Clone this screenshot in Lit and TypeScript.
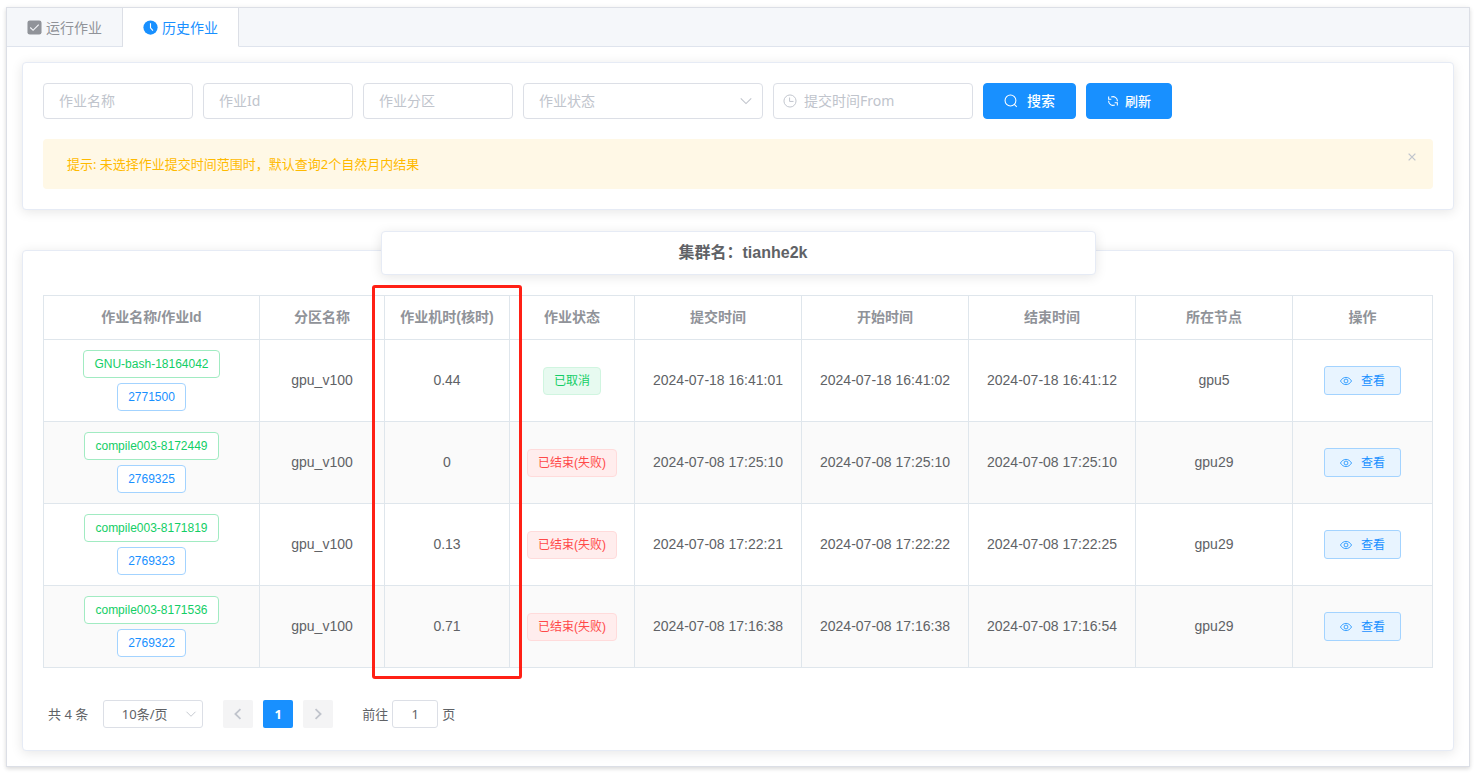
import { LitElement, html, css, svg } from "lit";
import { customElement, state } from "lit/decorators.js";
import { classMap } from "lit/directives/class-map.js";

interface Job {
  name: string;
  id: string;
  partition: string;
  hours: string;
  status: string;
  ok: boolean;
  submitted: string;
  started: string;
  ended: string;
  node: string;
}

const JOBS: Job[] = [
  { name: "GNU-bash-18164042", id: "2771500", partition: "gpu_v100", hours: "0.44", status: "已取消", ok: true, submitted: "2024-07-18 16:41:01", started: "2024-07-18 16:41:02", ended: "2024-07-18 16:41:12", node: "gpu5" },
  { name: "compile003-8172449", id: "2769325", partition: "gpu_v100", hours: "0", status: "已结束(失败)", ok: false, submitted: "2024-07-08 17:25:10", started: "2024-07-08 17:25:10", ended: "2024-07-08 17:25:10", node: "gpu29" },
  { name: "compile003-8171819", id: "2769323", partition: "gpu_v100", hours: "0.13", status: "已结束(失败)", ok: false, submitted: "2024-07-08 17:22:21", started: "2024-07-08 17:22:22", ended: "2024-07-08 17:22:25", node: "gpu29" },
  { name: "compile003-8171536", id: "2769322", partition: "gpu_v100", hours: "0.71", status: "已结束(失败)", ok: false, submitted: "2024-07-08 17:16:38", started: "2024-07-08 17:16:38", ended: "2024-07-08 17:16:54", node: "gpu29" },
];

const HEADERS = ["作业名称/作业Id", "分区名称", "作业机时(核时)", "作业状态", "提交时间", "开始时间", "结束时间", "所在节点", "操作"];

const shapes = {
  check: svg`<rect x="0.5" y="0.5" width="15" height="15" rx="2.5" fill="currentColor"/><path d="M3.5 8l3 3 6-6" fill="none" stroke="#f5f7fa" stroke-width="1.2"/>`,
  clockSolid: svg`<circle cx="8" cy="8" r="7.6" fill="currentColor"/><path d="M8 3.5V8.4l2.6 3" fill="none" stroke="#fff" stroke-width="1.2"/>`,
  clock: svg`<circle cx="8" cy="8" r="6.9" fill="none" stroke="currentColor" stroke-width="1.1"/><path d="M7.5 4v4.5H12" fill="none" stroke="currentColor" stroke-width="1.1"/>`,
  search: svg`<circle cx="7.4" cy="7.4" r="6.2" fill="none" stroke="currentColor" stroke-width="1.2"/><path d="M11.8 11.8l2.8 2.8" stroke="currentColor" stroke-width="1.2"/>`,
  refresh: svg`<path d="M5.600 2.700A5.900 5.900 0 0 1 13.900 8.200M10.400 13.300A5.900 5.900 0 0 1 2.100 7.800" fill="none" stroke="currentColor" stroke-width="1.400"/><path d="M2.200 2v3.600h3.600M13.800 14v-3.600h-3.600" fill="none" stroke="currentColor" stroke-width="1.400"/>`,
  eye: svg`<path d="M.6 8C2.4 4.9 5 3.200 8 3.200S13.600 4.900 15.400 8C13.600 11.100 11 12.800 8 12.800S2.400 11.100.6 8z" fill="none" stroke="currentColor" stroke-width="1.100"/><circle cx="8" cy="8" r="2.600" fill="none" stroke="currentColor" stroke-width="1.100"/>`,
  down: svg`<path d="M2 5l6 6 6-6" fill="none" stroke="currentColor" stroke-width="1.200"/>`,
  left: svg`<path d="M10.800 2.500L5 8l5.800 5.500" fill="none" stroke="currentColor" stroke-width="2"/>`,
  right: svg`<path d="M5.200 2.500L11 8l-5.800 5.500" fill="none" stroke="currentColor" stroke-width="2"/>`,
  close: svg`<path d="M3.500 3.500l9 9M12.500 3.500l-9 9" fill="none" stroke="currentColor" stroke-width="1.700"/>`,
};

const icon = (name: keyof typeof shapes, cls = "") =>
  html`<svg class="icon ${cls}" viewBox="0 0 16 16" aria-hidden="true">${shapes[name]}</svg>`;

@customElement("app-root")
export class AppRoot extends LitElement {
  @state() private tab = 1;
  @state() private tipOpen = true;

  static styles = css`
    :host {
      display: block;
      padding: 7px 7px 7px 6px;
      color: #606266;
      font: 14px/24px "Liberation Sans", "Noto Sans CJK SC", sans-serif;
    }
    * { box-sizing: border-box; }
    button, input, select { font-family: "Noto Sans", "Noto Sans CJK SC", sans-serif; margin: 0; }
    button { cursor: pointer; }
    .icon { width: 14px; height: 14px; flex: none; display: block; }
    .icon.tiny { width: 12px; height: 12px; }
    .icon.mark { width: 15px; height: 15px; }

    .panel {
      background: #fff;
      border: 1px solid #dcdfe6;
      box-shadow: 0 2px 4px rgba(0, 0, 0, 0.12), 0 0 6px rgba(0, 0, 0, 0.04);
    }
    .tabs { display: flex; background: #f5f7fa; border-bottom: 1px solid #dfe4ed; }
    .tab {
      display: flex;
      align-items: center;
      gap: 4px;
      height: 39px;
      margin-bottom: -1px;
      padding: 0 20px;
      border: 0;
      border-right: 1px solid transparent;
      border-bottom: 1px solid #dfe4ed;
      background: none;
      color: #909399;
      font-size: 14px;
    }
    .tab:first-child { border-right-color: #dcdfe6; }
    .tab.active { background: #fff; color: #1890ff; border-right-color: #dcdfe6; border-bottom-color: #fff; }
    .content { padding: 15px; }

    .card {
      padding: 20px;
      background: #fff;
      border: 1px solid #e6ebf5;
      border-radius: 4px;
      box-shadow: 0 2px 12px rgba(0, 0, 0, 0.1);
    }
    .card + .card { margin-top: 40px; }

    .filters { display: flex; flex-wrap: wrap; gap: 10px; }
    .field { position: relative; width: 150px; color: #c0c4cc; }
    .field.state { width: 240px; }
    .field.date { width: 200px; }
    .box {
      display: block;
      width: 100%;
      height: 36px;
      padding: 0 15px 2px;
      border: 1px solid #dcdfe6;
      border-radius: 4px;
      background: #fff;
      color: #606266;
      font-size: 14px;
      appearance: none;
      outline: none;
    }
    .box::placeholder { color: #c0c4cc; opacity: 1; }
    select.box { color: #c0c4cc; }
    .date .box { padding-left: 30px; }
    .lead, .trail { position: absolute; top: 0; bottom: 0; margin: auto 0; pointer-events: none; }
    .lead { left: 10px; }
    .trail { right: 10px; }

    .btn {
      display: flex;
      align-items: center;
      height: 36px;
      padding: 0 20px;
      border: 1px solid #1890ff;
      border-radius: 4px;
      background: #1890ff;
      color: #fff;
      font-size: 14px;
      font-weight: 500;
      gap: 9px;
    }
    .btn span { padding-bottom: 2px; }
    .btn.compact { font-size: 13px; gap: 6px; }
    .btn.view {
      display: inline-flex;
      height: 29px;
      padding: 0 15px;
      border-color: #a3d3ff;
      border-radius: 3px;
      background: #e8f4ff;
      color: #1890ff;
      font-size: 12px;
      font-weight: 400;
      vertical-align: middle;
    }

    .tip {
      display: flex;
      justify-content: space-between;
      align-items: flex-start;
      margin-top: 20px;
      padding: 12px 15px 12px 24px;
      border-radius: 4px;
      background: #fff8e6;
      color: #ffba00;
      font-family: "Noto Sans", "Noto Sans CJK SC", sans-serif;
      font-size: 13px;
      line-height: 26px;
    }
    .close { padding: 0; border: 0; background: none; color: #c0c4cc; }

    .title {
      width: calc(50% + 20px);
      margin: -40px auto 20px;
      padding: 0 0 0 10px;
      border: 1px solid #e6ebf5;
      border-radius: 4px;
      background: #fff;
      box-shadow: 0 2px 12px rgba(0, 0, 0, 0.1);
      font-size: 16px;
      line-height: 42px;
      font-weight: 700;
      text-align: center;
    }

    .tablewrap { position: relative; }
    .frame {
      position: absolute;
      top: -10px;
      bottom: -11px;
      right: 911px;
      width: 150px;
      border: 3px solid #ff2015;
      border-radius: 3px;
      pointer-events: none;
    }
    table {
      width: 100%;
      table-layout: fixed;
      border-collapse: separate;
      border-spacing: 0;
      border: solid #dfe6ec;
      border-width: 1px 0 0 1px;
      text-align: center;
    }
    th, td { padding: 10px 0; border: solid #dfe6ec; border-width: 0 1px 1px 0; line-height: 23px; }
    th { height: 44px; padding: 0; color: #909399; }
    tbody tr:nth-child(even) { background: #fafafa; }
    .c125 { width: 125px; }
    .c167 { width: 167px; }
    .c157 { width: 157px; }
    .c140 { width: 140px; }
    .stack { display: flex; flex-direction: column; align-items: center; gap: 5px; }
    .tag {
      display: inline-block;
      height: 28px;
      padding: 0 10px;
      border: 1px solid #a3d3ff;
      border-radius: 4px;
      background: #fff;
      color: #1890ff;
      font-size: 12px;
      line-height: 26px;
      white-space: nowrap;
      vertical-align: middle;
    }
    .tag.name { border-color: #a1ebc2; color: #13ce66; }
    .tag.done { border-color: #d0f5e0; background: #e7faf0; color: #13ce66; }
    .tag.fail { border-color: #ffdbdb; background: #ffeded; color: #ff4949; }

    .pager {
      display: flex;
      align-items: center;
      margin-top: 30px;
      padding: 2px 5px;
      font-family: "Noto Sans", "Noto Sans CJK SC", sans-serif;
      font-size: 13px;
      line-height: 28px;
    }
    .size { position: relative; width: 100px; margin: 0 20px 0 15px; color: #c0c4cc; }
    .pager .box { height: 28px; font-size: 13px; border-radius: 3px; text-align: center; color: #606266; }
    .size .box { padding: 0 25px 0 8px; }
    .size .trail { right: 6px; }
    .pages { display: flex; gap: 10px; margin-right: 29px; }
    .page {
      display: flex;
      align-items: center;
      justify-content: center;
      width: 30px;
      height: 28px;
      padding: 0;
      border: 0;
      border-radius: 2px;
      background: #f4f4f5;
      color: #c0c4cc;
      font-size: 13px;
      font-weight: 700;
    }
    .page.current { background: #1890ff; color: #fff; }
    .jump { display: flex; gap: 4px; }
    .jump .box { width: 46px; padding: 0 3px; }
  `;

  private row(j: Job) {
    return html`<tr>
      <td><div class="stack"><span class="tag name">${j.name}</span><span class="tag">${j.id}</span></div></td>
      <td>${j.partition}</td>
      <td>${j.hours}</td>
      <td><span class=${classMap({ tag: true, done: j.ok, fail: !j.ok })}>${j.status}</span></td>
      <td>${j.submitted}</td>
      <td>${j.started}</td>
      <td>${j.ended}</td>
      <td>${j.node}</td>
      <td><button class="btn view" type="button">${icon("eye", "tiny")}<span>查看</span></button></td>
    </tr>`;
  }

  render() {
    return html`
      <main class="panel">
        <div class="tabs" role="tablist">
          ${["运行作业", "历史作业"].map(
            (label, i) => html`<button type="button" role="tab" aria-selected=${this.tab === i}
              class=${classMap({ tab: true, active: this.tab === i })} @click=${() => (this.tab = i)}>
              ${icon(i ? "clockSolid" : "check", "mark")}<span>${label}</span></button>`,
          )}
        </div>
        <div class="content">
          <section class="card">
            <form class="filters" @submit=${(e: Event) => e.preventDefault()}>
              <div class="field"><input class="box" aria-label="作业名称" placeholder="作业名称" /></div>
              <div class="field"><input class="box" aria-label="作业Id" placeholder="作业Id" /></div>
              <div class="field"><input class="box" aria-label="作业分区" placeholder="作业分区" /></div>
              <div class="field state">
                <select class="box" aria-label="作业状态"><option>作业状态</option></select>
                ${icon("down", "trail")}
              </div>
              <div class="field date">
                <input class="box" aria-label="提交时间From" placeholder="提交时间From" />${icon("clock", "lead")}
              </div>
              <button class="btn" type="submit">${icon("search")}<span>搜索</span></button>
              <button class="btn compact" type="button">${icon("refresh", "tiny")}<span>刷新</span></button>
            </form>
            ${this.tipOpen
              ? html`<div class="tip" role="alert">
                  <span>提示: 未选择作业提交时间范围时，默认查询2个自然月内结果</span>
                  <button class="close" type="button" aria-label="关闭" @click=${() => (this.tipOpen = false)}>
                    ${icon("close", "tiny")}
                  </button>
                </div>`
              : null}
          </section>
          <section class="card">
            <div class="title">集群名：tianhe2k</div>
            <div class="tablewrap">
              <table>
                <colgroup>
                  <col /><col class="c125" /><col class="c125" /><col class="c125" />
                  <col class="c167" /><col class="c167" /><col class="c167" />
                  <col class="c157" /><col class="c140" />
                </colgroup>
                <thead><tr>${HEADERS.map((h) => html`<th scope="col">${h}</th>`)}</tr></thead>
                <tbody>${JOBS.map((j) => this.row(j))}</tbody>
              </table>
              <div class="frame"></div>
            </div>
            <nav class="pager" aria-label="分页">
              <span>共 4 条</span>
              <div class="size">
                <select class="box" aria-label="每页条数"><option>10条/页</option></select>
                ${icon("down", "trail tiny")}
              </div>
              <div class="pages">
                <button class="page" type="button" aria-label="上一页" disabled>${icon("left")}</button>
                <button class="page current" type="button" aria-current="page">1</button>
                <button class="page" type="button" aria-label="下一页" disabled>${icon("right")}</button>
              </div>
              <div class="jump">
                <label for="goto">前往</label>
                <input id="goto" class="box" .value=${"1"} />
                <span>页</span>
              </div>
            </nav>
          </section>
        </div>
      </main>
    `;
  }
}
